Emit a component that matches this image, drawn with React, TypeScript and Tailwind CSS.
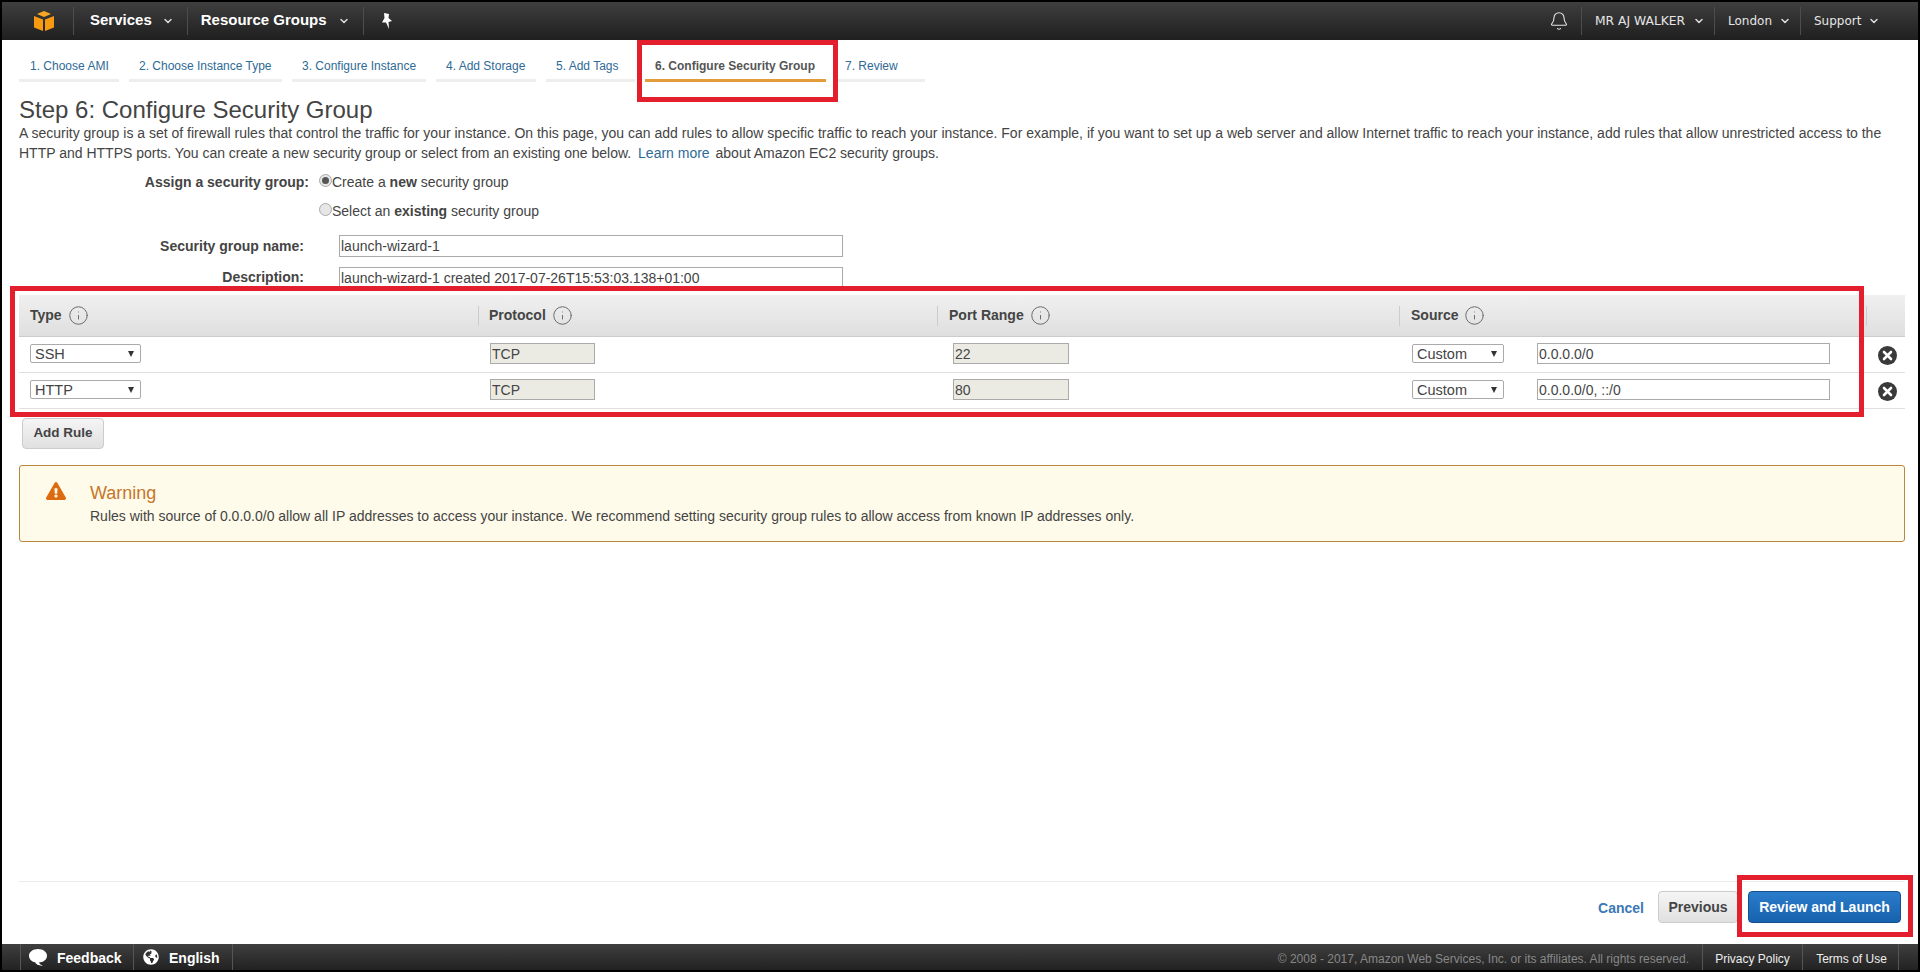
import React from "react";
import { Bell, ChevronDown, Info } from "lucide-react";
import { FaExclamationTriangle, FaGlobeAmericas } from "react-icons/fa";

const tabs = [
  { label: "1. Choose AMI", w: "w-[100px] pl-[11px]" },
  { label: "2. Choose Instance Type", w: "w-[153px] pl-[10px]" },
  { label: "3. Configure Instance", w: "w-[134px] pl-[10px]" },
  { label: "4. Add Storage", w: "w-[100px] pl-[10px]" },
  { label: "5. Add Tags", w: "w-[89px] pl-[10px]" },
  { label: "6. Configure Security Group", w: "w-[181px] pl-[10px]", active: true },
  { label: "7. Review", w: "w-[89px] pl-[9px]" },
];

const rules = [
  { type: "SSH", port: "22", source: "0.0.0.0/0" },
  { type: "HTTP", port: "80", source: "0.0.0.0/0, ::/0" },
];

const Sep = () => <div className="h-[28px] w-px bg-[#4d4d4d]" />;

const Chevron = () => <ChevronDown className="h-[12px] w-[12px] text-[#ddd]" strokeWidth={3} />;

const Cube = () => (
  <svg viewBox="0 0 20 20" className="h-[20px] w-[20px]">
    <path d="M10 0 L17 3 L10 6 L3 3 Z" fill="#f7a823" />
    <path d="M0 5 L9 8.5 V20 L0 16.5 Z" fill="#f79a10" />
    <path d="M20 5 L11 8.5 V20 L20 16.5 Z" fill="#f79a10" />
  </svg>
);

const Pin = () => (
  <svg viewBox="0 0 14 16" className="h-[16px] w-[14px]">
    <path d="M4 0 L9 1 L8.5 5 L12 8 L8.5 9 L9 16 L6 9.5 L2 9.5 L4.5 5 Z" fill="#fff" />
  </svg>
);

const Bubble = () => (
  <svg viewBox="0 0 18 17" className="h-[17px] w-[18px]">
    <path d="M9 0 C14 0 18 2.8 18 6.8 C18 10.8 14 13.5 10 13.5 C10.5 15 12 16 14 16.6 C10 17 7 15.5 6 13.3 C2.5 12.6 0 10.2 0 6.8 C0 2.8 4 0 9 0 Z" fill="#fff" />
  </svg>
);

const RemoveIcon = () => (
  <svg viewBox="0 0 19 19" className="h-[19px] w-[19px]">
    <circle cx="9.5" cy="9.5" r="9.5" fill="#3a3a3a" />
    <path d="M6 6 L13 13 M13 6 L6 13" stroke="#fff" strokeWidth="2.6" strokeLinecap="round" />
  </svg>
);

const HeaderCell = ({ label, className }: { label: string; className: string }) => (
  <div className={`flex items-center gap-[6px] ${className}`}>
    <span className="text-[14px] font-bold text-[#444]">{label}</span>
    <Info className="h-[21px] w-[21px] text-[#666]" strokeWidth={1.1} />
  </div>
);

const SelectBox = ({ value, width }: { value: string; width: string }) => (
  <div className={`relative h-[19px] ${width}`}>
    <select
      defaultValue={value}
      className="block h-full w-full appearance-none rounded-[2px] border border-[#aaa] bg-white pb-0 pl-[4px] pt-[1px] text-[14.5px] leading-[15px] text-[#444] outline-none"
    >
      <option>{value}</option>
    </select>
    <span className="pointer-events-none absolute right-[7px] top-[7px] h-0 w-0 border-x-[3px] border-t-[6px] border-x-transparent border-t-[#333]" />
  </div>
);

const TextBox = ({ value, width, off }: { value: string; width: string; off?: boolean }) => (
  <input
    readOnly
    value={value}
    className={`block h-[21px] border border-[#aaa] pl-[1px] text-[14px] leading-none text-[#444] outline-none ${width} ${off ? "bg-[#ebebe4]" : "bg-white"}`}
  />
);

const Radio = ({ on }: { on?: boolean }) => (
  <span className="mt-[-5px] flex h-[13px] w-[13px] items-center justify-center rounded-full border border-[#aaa] bg-[#e6e6e6]">
    {on && <span className="h-[7px] w-[7px] rounded-full bg-[#555]" />}
  </span>
);

const Overlay = ({ className }: { className: string }) => (
  <div className={`pointer-events-none absolute border-[5px] border-[#e31e2d] ${className}`} />
);

export default function App() {
  return (
    <div className="relative flex h-[972px] w-[1920px] flex-col overflow-hidden bg-black p-[2px] font-['Liberation_Sans',Arial,sans-serif]">
      {/* top nav */}
      <div className="flex h-[38px] shrink-0 items-center bg-gradient-to-b from-[#3f3f3f] to-[#1f1f1f] pl-[32px] pr-[38px] text-white">
        <Cube />
        <div className="ml-[19px]"><Sep /></div>
        <span className="ml-[16px] mt-[-2px] text-[15px] font-bold">Services</span>
        <span className="ml-[10px]"><Chevron /></span>
        <div className="ml-[13px]"><Sep /></div>
        <span className="ml-[13px] mt-[-2px] text-[15px] font-bold">Resource Groups</span>
        <span className="ml-[11px]"><Chevron /></span>
        <div className="ml-[13px]"><Sep /></div>
        <span className="ml-[16px]"><Pin /></span>
        <div className="ml-auto flex items-center text-[12px] text-[#e6e6e6] font-['DejaVu_Sans',sans-serif]">
          <Bell className="h-[20px] w-[20px]" strokeWidth={1.3} />
          <div className="ml-[12px]"><Sep /></div>
          <span className="ml-[13px] w-[92px] whitespace-nowrap text-[12.3px]">MR AJ WALKER</span>
          <span className="ml-[6px]"><Chevron /></span>
          <div className="ml-[9px]"><Sep /></div>
          <span className="ml-[13px] w-[44px]">London</span>
          <span className="ml-[7px]"><Chevron /></span>
          <div className="ml-[9px]"><Sep /></div>
          <span className="ml-[13px] w-[48px]">Support</span>
          <span className="ml-[6px]"><Chevron /></span>
        </div>
      </div>

      {/* page */}
      <div className="flex min-h-0 flex-1 flex-col bg-white pl-[17px] pr-[13px]">
        <div className="flex h-[42px] shrink-0 items-end gap-[10px]">
          {tabs.map((t) => (
            <div
              key={t.label}
              className={`h-[34px] whitespace-nowrap border-b-[3px] pt-[9px] text-[12px] ${t.w} ${
                t.active ? "border-[#e39c3a] font-bold text-[#555]" : "border-[#eee] text-[#2e6a96]"
              }`}
            >
              {t.label}
            </div>
          ))}
        </div>

        <h1 className="mt-[15px] text-[24px] leading-[26px] text-[#444]">Step 6: Configure Security Group</h1>
        <p className="text-[14px] leading-[20px] text-[#444]">
          A security group is a set of firewall rules that control the traffic for your instance. On this page, you can add rules to allow specific traffic to reach your instance. For example, if you want to set up a web server and allow Internet traffic to reach your instance, add rules that allow unrestricted access to the HTTP and HTTPS ports. You can create a new security group or select from an existing one below.{" "}
          <span className="ml-[3px] mr-[2px] text-[#2e6a96]">Learn more</span> about Amazon EC2 security groups.
        </p>

        {/* form */}
        <div className="mt-[5px] text-[14px] text-[#444]">
          <div className="flex h-[29px] items-center">
            <div className="w-[290px] text-right font-bold">Assign a security group:</div>
            <div className="ml-[10px] flex items-center">
              <Radio on />
              <span>Create a <b>new</b> security group</span>
            </div>
          </div>
          <div className="flex h-[29px] items-center">
            <div className="ml-[300px] flex items-center">
              <Radio />
              <span>Select an <b>existing</b> security group</span>
            </div>
          </div>
          <div className="mt-[9px] flex h-[22px] items-center">
            <div className="w-[285px] text-right font-bold">Security group name:</div>
            <input readOnly value="launch-wizard-1" className="ml-[35px] h-[22px] w-[504px] border border-[#aaa] pl-[1px] outline-none" />
          </div>
          <div className="mt-[10px] flex h-[22px] items-center">
            <div className="mt-[-1px] w-[285px] text-right font-bold">Description:</div>
            <input readOnly value="launch-wizard-1 created 2017-07-26T15:53:03.138+01:00" className="ml-[35px] h-[22px] w-[504px] border border-[#aaa] pl-[1px] outline-none" />
          </div>
        </div>

        {/* rules table */}
        <div className="mt-[6px]">
          <div className="grid h-[42px] grid-cols-[459px_459px_462px_467px_39px] items-center border-b border-[#ccc] bg-gradient-to-b from-[#f0f0f0] to-[#dfdfdf]">
            <HeaderCell label="Type" className="h-[20px] pl-[11px]" />
            <HeaderCell label="Protocol" className="h-[20px] border-l border-[#ccc] pl-[10px]" />
            <HeaderCell label="Port Range" className="h-[20px] border-l border-[#ccc] pl-[11px]" />
            <HeaderCell label="Source" className="h-[20px] border-l border-[#ccc] pl-[11px]" />
            <div className="h-[20px] border-l border-[#ccc]" />
          </div>
          {rules.map((r) => (
            <div key={r.type} className="grid h-[36px] grid-cols-[459px_459px_462px_467px_39px] items-start border-b border-[#e0e0e0] pt-[6px]">
              <div className="pl-[11px] pt-[1px]"><SelectBox value={r.type} width="w-[111px]" /></div>
              <div className="pl-[12px]"><TextBox value="TCP" width="w-[105px]" off /></div>
              <div className="pl-[16px]"><TextBox value={r.port} width="w-[116px]" off /></div>
              <div className="flex items-start pl-[13px]">
                <div className="pt-[1px]"><SelectBox value="Custom" width="w-[92px]" /></div>
                <div className="ml-[33px]"><TextBox value={r.source} width="w-[293px]" /></div>
              </div>
              <div className="flex justify-center pl-[3px] pt-[3px]"><RemoveIcon /></div>
            </div>
          ))}
        </div>

        <button className="ml-[3px] mt-[9px] h-[31px] w-[82px] shrink-0 rounded-[4px] border border-[#ccc] bg-gradient-to-b from-[#f5f5f5] to-[#e0e0e0] text-[13.5px] font-bold text-[#444]">
          Add Rule
        </button>

        {/* warning */}
        <div className="mt-[16px] flex h-[77px] shrink-0 rounded-[3px] border border-[#b8883e] bg-[#fffbea] pl-[26px] pt-[16px]">
          <FaExclamationTriangle className="h-[18px] w-[20px] text-[#dd6b10]" />
          <div className="ml-[24px]">
            <div className="text-[18px] leading-[22px] text-[#c5762b]">Warning</div>
            <div className="mt-[2px] text-[14px] leading-[20px] text-[#444]">
              Rules with source of 0.0.0.0/0 allow all IP addresses to access your instance. We recommend setting security group rules to allow access from known IP addresses only.
            </div>
          </div>
        </div>

        {/* wizard actions */}
        <div className="mt-auto flex h-[63px] shrink-0 items-start justify-end gap-[14px] border-t border-[#eaeaea] pr-[4px] pt-[9px]">
          <span className="mt-[7px] text-[14px] font-bold text-[#3a78b5]">Cancel</span>
          <button className="h-[32px] w-[80px] rounded-[4px] border border-[#ccc] bg-gradient-to-b from-[#f5f5f5] to-[#e0e0e0] text-[14px] font-bold text-[#444]">Previous</button>
          <button className="ml-[-4px] h-[32px] w-[153px] rounded-[4px] border border-[#15508f] bg-gradient-to-b from-[#2a7ccb] to-[#1762ae] text-[14px] font-bold text-white">Review and Launch</button>
        </div>
      </div>

      {/* footer */}
      <div className="flex h-[26px] shrink-0 items-center bg-gradient-to-b from-[#3f3f3f] to-[#222] text-white">
        <div className="ml-[18px] flex h-full items-center border-l border-[#555] pl-[8px]">
          <Bubble />
          <span className="ml-[10px] mt-[3px] w-[76px] text-[14px] font-bold">Feedback</span>
        </div>
        <div className="flex h-full items-center border-l border-[#555] pl-[9px]">
          <FaGlobeAmericas className="h-[16px] w-[16px]" />
          <span className="ml-[10px] mt-[3px] w-[63px] text-[14px] font-bold">English</span>
        </div>
        <div className="h-full border-l border-[#555]" />
        <span className="ml-auto mr-[13px] mt-[3px] text-[12px] text-[#888]">© 2008 - 2017, Amazon Web Services, Inc. or its affiliates. All rights reserved.</span>
        <div className="flex h-full w-[100px] items-center justify-center border-l border-[#555] pt-[3px] text-[12px] text-[#eee]">Privacy Policy</div>
        <div className="flex h-full w-[96px] items-center justify-center border-l border-[#555] pl-[2px] pt-[3px] text-[12px] text-[#eee]">Terms of Use</div>
        <div className="mr-[19px] h-full border-l border-[#555]" />
      </div>

      <Overlay className="left-[637px] top-[40px] h-[62px] w-[201px]" />
      <Overlay className="left-[10px] top-[286px] h-[131px] w-[1854px]" />
      <Overlay className="left-[1737px] top-[875px] h-[62px] w-[176px]" />
    </div>
  );
}
